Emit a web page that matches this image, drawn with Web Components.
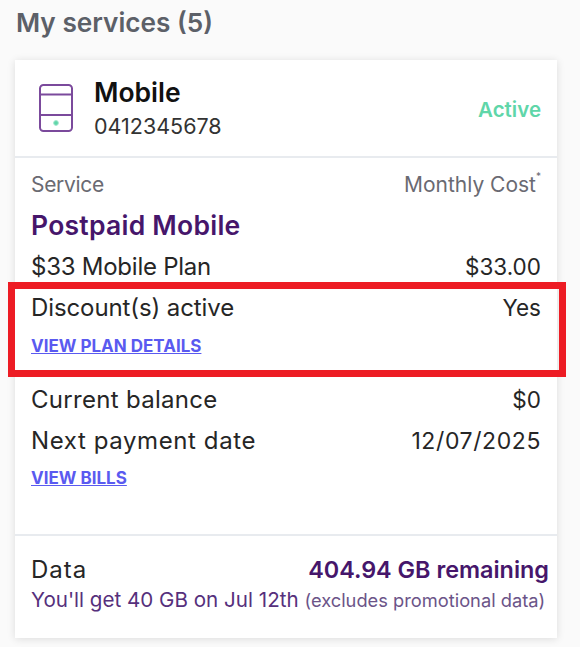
<!DOCTYPE html>
<html>
<head>
<meta charset="utf-8">
<style>
    html, body { margin: 0; height: 647px; overflow: hidden; }
    body { background: #fafafa; font-family: Inter, Lato, sans-serif; color: #222; }
</style>
</head>
<body>
<services-page></services-page>

<script>
class InfoRow extends HTMLElement {
    constructor() {
        super();
        this.attachShadow({mode: 'open'});
    }

    connectedCallback() {
        this.shadowRoot.innerHTML = `
            <style>
                :host {
                    display: flex;
                    justify-content: space-between;
                    align-items: baseline;
                    height: 41px;
                    line-height: 41px;
                    font-size: 24px;
                    color: #262626;
                }
                :host([muted]) { color: #6a6a72; font-size: 21px; height: 36px; line-height: 36px; }
                .label { letter-spacing: var(--ls, 0); }
                .value { font-size: var(--vf, 22.5px); letter-spacing: var(--vs, 0); }
                ::slotted(sup) { font-size: 10px; line-height: 0; vertical-align: 12px; }
            </style>
            <span class="label">${this.getAttribute('label')}</span>
            <span class="value">${this.getAttribute('value')}<slot></slot></span>`;
    }
}

class PhoneIcon extends HTMLElement {
    constructor() {
        super();
        this.attachShadow({mode: 'open'});
        this.shadowRoot.innerHTML = `
            <style>:host { display: block; width: 34px; height: 48px; } svg { display: block; }</style>
            <svg width="34" height="48" viewBox="0 0 34 48" fill="none" stroke="#7b4a9c" stroke-width="2">
                <rect x="1" y="1" width="32" height="46" rx="3.5"/>
                <path d="M1 10.5H33M1 31H33"/>
                <circle cx="17" cy="39" r="2.4" fill="#5fd6a9" stroke="#a5e8cf" stroke-width="1"/>
            </svg>`;
    }
}

class ServiceCard extends HTMLElement {
    constructor() {
        super();
        this.attachShadow({mode: 'open'});
        this.shadowRoot.innerHTML = `
            <style>
                :host {
                    display: block;
                    background: #fff;
                    margin: 0 23px 0 15px;
                    height: 578px;
                    box-shadow: 0 1px 8px rgba(0, 0, 0, .12);
                }
                .head {
                    display: flex;
                    align-items: center;
                    gap: 21px;
                    height: 96px;
                    padding: 0 16px 0 24px;
                    border-bottom: 2px solid #e8ebef;
                }
                .name { font-size: 26.5px; font-weight: 600; color: #111; line-height: 32px; margin-top: 1px; }
                .num { font-size: 21.5px; color: #333; line-height: 32px; margin-top: 2px; }
                .status { margin-left: auto; margin-top: 3px; color: #5fd6a9; font-weight: 600; font-size: 20.5px; }
                .body { padding: 9px 16px 0; height: 378px; box-sizing: border-box; border-bottom: 2px solid #e8ebef; }
                .plan { color: #46166b; font-size: 26.5px; font-weight: 600; height: 43px; line-height: 44px; letter-spacing: .25px; }
                a {
                    display: block;
                    color: #5a5af0;
                    font-size: 17px;
                    font-weight: 700;
                    text-decoration: underline;
                    line-height: 24px;
                    margin-top: 5px;
                }
                a.first { margin-top: 6px; }
                .gap { height: 21px; }
                .foot { padding: 14px 8px 0 16px; }
                .foot .top { display: flex; justify-content: space-between; align-items: center; height: 38px; font-size: 24px; color: #262626; }
                .foot .top span { letter-spacing: 1px; }
                .foot b { color: #46166b; font-size: 23.4px; font-weight: 600; }
                .foot p { margin: 0; color: #56307c; font-size: 20.6px; line-height: 24px; white-space: nowrap; }
                .foot small { font-size: 18.3px; color: #6b5488; }
            </style>
            <div class="head">
                <phone-icon></phone-icon>
                <div>
                    <div class="name">Mobile</div>
                    <div class="num">0412345678</div>
                </div>
                <div class="status">Active</div>
            </div>
            <div class="body">
                <info-row label="Service" value="Monthly Cost" muted style="--ls:-.3px;--vf:21px"><sup>*</sup></info-row>
                <div class="plan">Postpaid Mobile</div>
                <info-row label="$33 Mobile Plan" value="$33.00" style="--ls:-.25px"></info-row>
                <info-row label="Discount(s) active" value="Yes" style="--ls:-.1px"></info-row>
                <a class="first">VIEW PLAN DETAILS</a>
                <div class="gap"></div>
                <info-row label="Current balance" value="$0" style="--ls:.3px"></info-row>
                <info-row label="Next payment date" value="12/07/2025" style="--ls:.6px;--vf:23px;--vs:.6px"></info-row>
                <a>VIEW BILLS</a>
            </div>
            <div class="foot">
                <div class="top"><span>Data</span><b>404.94 GB remaining</b></div>
                <p>You'll get 40 GB on Jul 12th <small>(excludes promotional data)</small></p>
            </div>`;
    }
}

class ServicesPage extends HTMLElement {
    constructor() {
        super();
        this.attachShadow({mode: 'open'});
        this.shadowRoot.innerHTML = `
            <style>
                :host { display: block; position: relative; height: 647px; }
                h1 {
                    margin: 0;
                    padding-left: 16px;
                    height: 60px;
                    line-height: 45px;
                    font-size: 26.2px;
                    font-weight: 600;
                    color: #5c6068;
                }
                .highlight {
                    position: absolute;
                    left: 8px;
                    top: 282px;
                    width: 558px;
                    height: 95px;
                    box-sizing: border-box;
                    border: 7px solid #ed1c24;
                }
            </style>
            <h1>My services (5)</h1>
            <service-card></service-card>
            <div class="highlight"></div>`;
    }
}

customElements.define('info-row', InfoRow);
customElements.define('phone-icon', PhoneIcon);
customElements.define('service-card', ServiceCard);
customElements.define('services-page', ServicesPage);
</script>
</body>
</html>
